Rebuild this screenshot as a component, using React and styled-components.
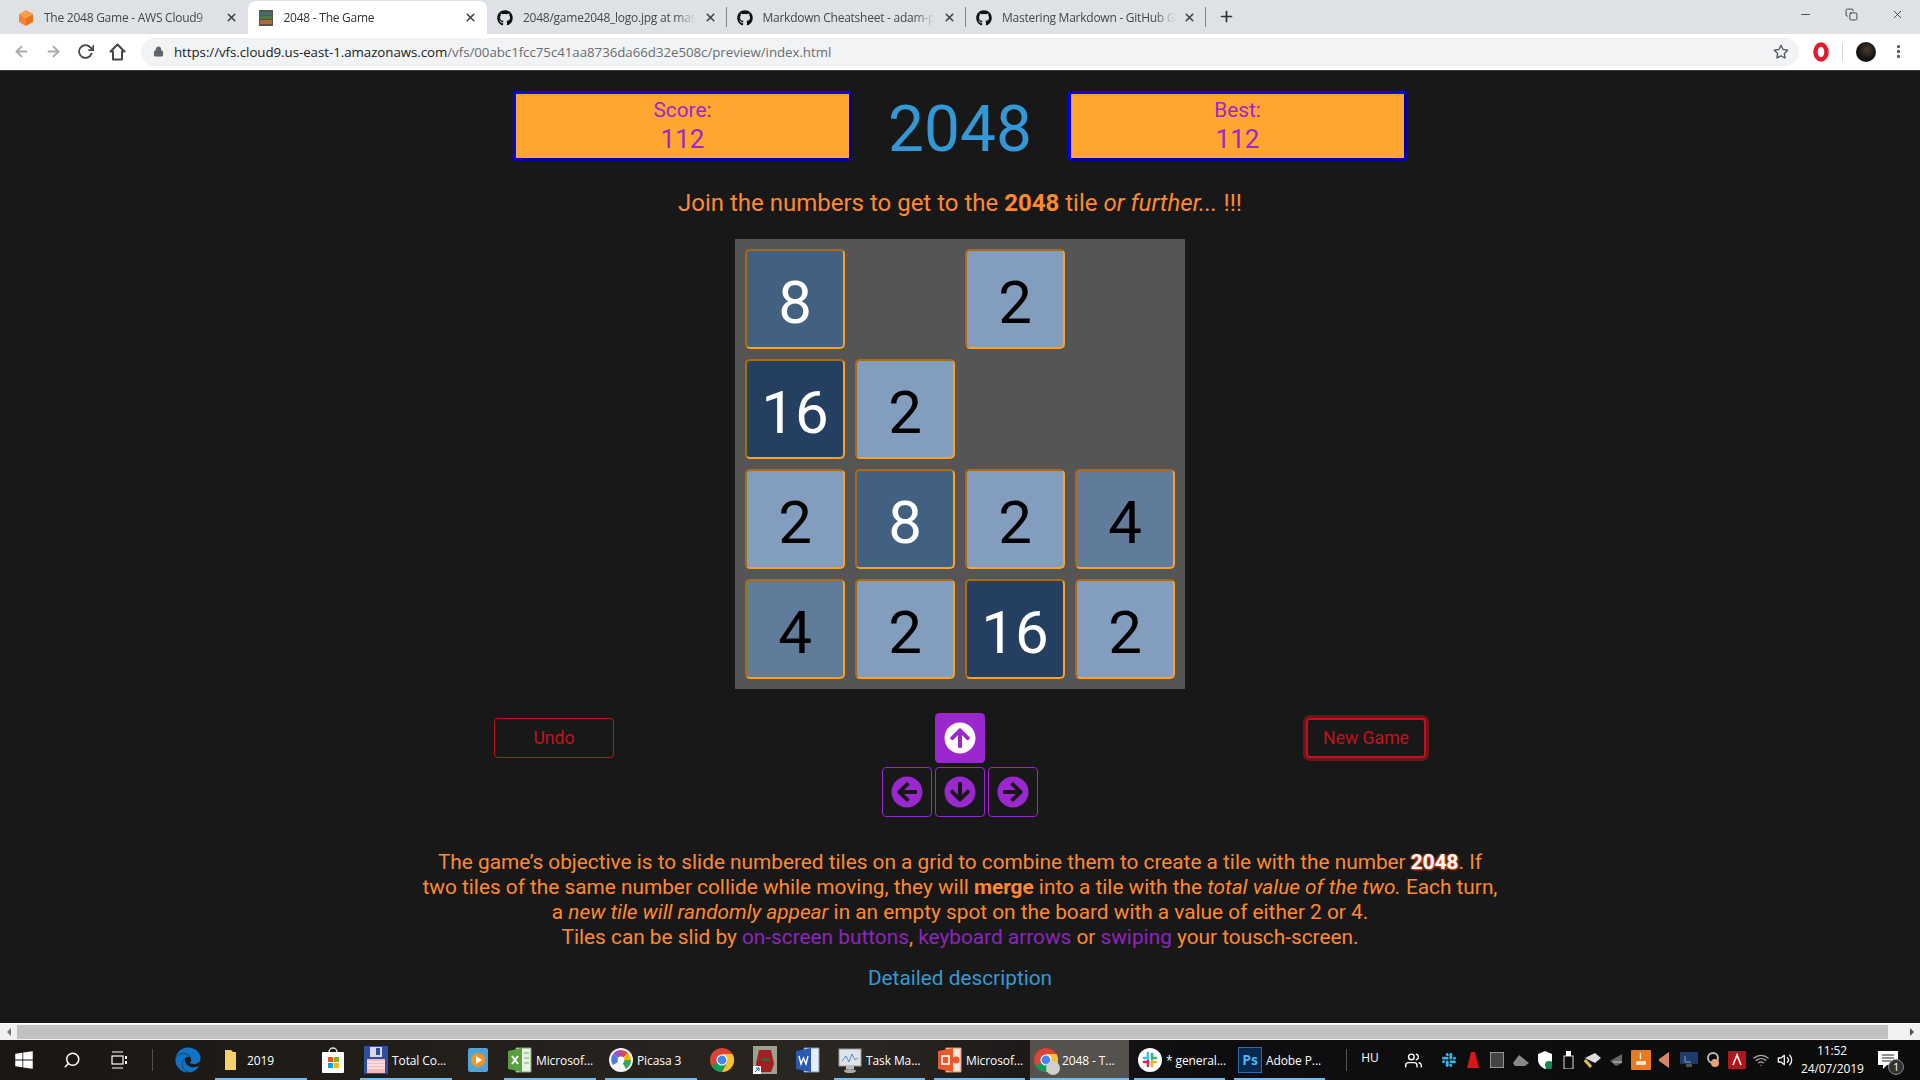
import React from 'react'
import styled, { createGlobalStyle } from 'styled-components'
import {
  FaGithub, FaWindows, FaEdge, FaArrowCircleUp, FaArrowCircleDown,
  FaArrowCircleLeft, FaArrowCircleRight, FaSlack
} from 'react-icons/fa'
import {
  FiArrowLeft, FiArrowRight, FiRotateCw, FiSearch, FiStar, FiMoreVertical,
  FiPlus, FiX, FiMinus, FiCopy, FiUsers, FiWifi, FiVolume2, FiLock
} from 'react-icons/fi'

const GlobalStyle = createGlobalStyle`
  html, body {
    margin: 0;
    height: 100%;
    overflow: hidden;
    font-family: Roboto, sans-serif;
    background: #181818;
  }
  * { box-sizing: border-box; }
`

const Screen = styled.div`
  width: 1920px;
  height: 1080px;
  display: flex;
  flex-direction: column;
`

/* browser chrome */
const TabStrip = styled.div`
  height: 34px;
  background: #dee1e6;
  display: flex;
  align-items: flex-end;
  padding-left: 8px;
  position: relative;
`
const Tab = styled.div`
  width: 239.5px;
  height: 33px;
  display: flex;
  align-items: center;
  padding: 0 10px;
  font: 12px "Open Sans", sans-serif;
  letter-spacing: -0.25px;
  color: ${p => (p.$active ? '#333' : '#45484c')};
  background: ${p => (p.$active ? '#fff' : 'transparent')};
  border-radius: 8px 8px 0 0;
  position: relative;
  &::after {
    content: '';
    display: ${p => (p.$divider ? 'block' : 'none')};
    position: absolute;
    right: 0;
    top: 6px;
    width: 1px;
    height: 20px;
    background: #80868b;
  }
`
const TabIcon = styled.span`
  width: 16px;
  height: 16px;
  flex: none;
  display: flex;
  margin-right: 10px;
  font-size: 16px;
  color: #111;
`
const TabTitle = styled.span`
  flex: 1;
  white-space: nowrap;
  overflow: hidden;
  margin-right: 8px;
  -webkit-mask-image: linear-gradient(90deg, #000 88%, transparent 100%);
  mask-image: linear-gradient(90deg, #000 88%, transparent 100%);
`
const TabClose = styled(FiX)`
  flex: none;
  font-size: 13px;
  color: #444;
  stroke-width: 3;
`
const NewTab = styled(FiPlus)`
  margin: 0 0 9px 12px;
  font-size: 17px;
  color: #333;
  stroke-width: 2.4;
`
const WindowButtons = styled.div`
  margin-left: auto;
  align-self: flex-start;
  display: flex;
  color: #333;
  font-size: 13px;
`
const WindowButton = styled.div`
  width: 46px;
  height: 28px;
  display: flex;
  align-items: center;
  justify-content: center;
  svg { stroke-width: 1.6; }
`
const Toolbar = styled.div`
  height: 37px;
  background: #fff;
  display: flex;
  align-items: center;
  flex: none;
  padding-bottom: 1px;
  border-bottom: 1px solid #3a3a3a;
`
const NavButton = styled.div`
  width: 32px;
  height: 28px;
  flex: none;
  display: flex;
  align-items: center;
  justify-content: center;
  font-size: 17px;
  color: ${p => (p.$dim ? '#a7abb0' : '#44474b')};
  svg { stroke-width: 2.6; }
`
const NavGroup = styled.div`
  display: flex;
  padding-left: 5px;
  width: 141px;
`
const Omnibox = styled.div`
  width: 1658px;
  height: 28px;
  background: #f1f3f4;
  border-radius: 14px;
  display: flex;
  align-items: center;
  padding: 0 10px 0 12px;
  font: 13.3px "Open Sans", sans-serif;
  letter-spacing: -0.045px;
  color: #6a6d71;
`
const Lock = styled(FiLock)`
  font-size: 11px;
  margin-right: 10px;
  color: #5f6368;
  fill: #5f6368;
`
const Host = styled.span`
  color: #202124;
`
const StarIcon = styled(FiStar)`
  margin-left: auto;
  font-size: 16px;
  color: #55585c;
  stroke-width: 2;
`
const ToolbarExtras = styled.div`
  flex: 1;
  display: flex;
  align-items: center;
  padding-left: 14px;
`
const ToolbarSeparator = styled.span`
  width: 1px;
  height: 18px;
  background: #cfd1d4;
  margin: 0 13px 0 13px;
`
const Avatar = styled.span`
  width: 20px;
  height: 20px;
  border-radius: 50%;
  background: radial-gradient(circle at 55% 40%, #4a3a30 0, #111 60%);
`
const MenuDots = styled(FiMoreVertical)`
  margin-left: 14px;
  font-size: 17px;
  color: #555;
  stroke-width: 2.6;
`

/* game page */
const Page = styled.main`
  flex: 1;
  background: #181818;
  display: flex;
  flex-direction: column;
  align-items: center;
  padding-top: 20px;
  overflow: hidden;
  color: #ff8a2e;
`
const Header = styled.header`
  width: 894px;
  height: 70px;
  display: flex;
  justify-content: space-between;
  align-items: center;
`
const ScoreBox = styled.div`
  width: 339px;
  height: 70px;
  background: #ffa530;
  border: 3px outset #0000ff;
  border-radius: 4px;
  color: #9b27cf;
  text-align: center;
  font-size: 20.8px;
  line-height: 29px;
  padding-top: 2px;
`
const ScoreValue = styled.div`
  font-size: 26px;
`
const Title = styled.h1`
  margin: 0;
  padding-top: 7px;
  font-size: 64px;
  font-weight: 400;
  color: #3498d6;
  line-height: 70px;
`
const Tagline = styled.p`
  margin: 28px 0 0;
  height: 29px;
  font-size: 24px;
  line-height: 29px;
`
const Board = styled.div`
  margin-top: 21px;
  width: 450px;
  height: 450px;
  padding: 10px;
  background: #555;
  display: grid;
  grid-template-columns: repeat(4, 100px);
  grid-auto-rows: 100px;
  gap: 10px;
`
const tileColors = {
  2: { bg: '#829dbd', fg: '#000' },
  4: { bg: '#617c9b', fg: '#000' },
  8: { bg: '#42607f', fg: '#fff' },
  16: { bg: '#243f5f', fg: '#fff' }
}
const Cell = styled.div`
  display: flex;
  align-items: center;
  justify-content: center;
  font-size: 60px;
  border-radius: 5px;
  padding-top: 6px;
  border: 2px inset #ffa020;
  background: ${p => tileColors[p.$value].bg};
  color: ${p => tileColors[p.$value].fg};
`
const Empty = styled.div``
const Controls = styled.div`
  margin-top: 24px;
  width: 932px;
  display: flex;
  justify-content: space-between;
  align-items: flex-start;
`
const GameButton = styled.button`
  width: 120px;
  height: 40px;
  margin-top: 5px;
  background: transparent;
  color: #c4111d;
  border: 1px solid #c4111d;
  border-radius: 4px;
  font: 17.6px Roboto, sans-serif;
  padding: 0;
  box-shadow: ${p => (p.$focus ? '0 0 0 3px rgba(196,17,29,0.5)' : 'none')};
  border-width: ${p => (p.$focus ? '2px' : '1px')};
`
const ArrowPad = styled.div`
  display: flex;
  flex-direction: column;
  align-items: center;
  gap: 4px;
`
const ArrowRow = styled.div`
  display: flex;
  gap: 3px;
`
const ArrowButton = styled.button`
  width: 50px;
  height: 50px;
  padding: 0;
  display: flex;
  align-items: center;
  justify-content: center;
  border-radius: 4px;
  border: 1px solid #9b27cf;
  font-size: 32px;
  background: ${p => (p.$active ? '#9b27cf' : 'transparent')};
  color: ${p => (p.$active ? '#fff' : '#9b27cf')};
`
const Description = styled.p`
  margin: 33px 0 0;
  width: 1082px;
  text-align: center;
  font-size: 20.8px;
  line-height: 25px;
`
const Glow = styled.strong`
  color: #fff;
  text-shadow: 1px 1px 2px #ff4a1e, -1px 0 2px #ff4a1e;
`
const Accent = styled.span`
  color: #8f24c0;
`
const DetailLink = styled.a`
  margin-top: 16px;
  font-size: 20.8px;
  line-height: 25px;
  color: #3498d6;
`

/* scrollbar */
const ScrollBar = styled.div`
  height: 17px;
  flex: none;
  background: #f1f1f1;
  display: flex;
  align-items: center;
  border-top: 1px solid #fff;
`
const ScrollArrow = styled.span`
  width: 17px;
  display: flex;
  justify-content: center;
  margin-left: ${p => (p.$end ? 'auto' : '0')};
  &::before {
    content: '';
    border: 4px solid transparent;
    border-right-color: ${p => (p.$end ? 'transparent' : '#777')};
    border-left-color: ${p => (p.$end ? '#505050' : 'transparent')};
    margin-left: ${p => (p.$end ? '4px' : '-4px')};
  }
`
const ScrollThumb = styled.span`
  width: 1871px;
  height: 14px;
  background: #c1c1c1;
`

/* taskbar */
const Taskbar = styled.footer`
  height: 40px;
  flex: none;
  display: flex;
  align-items: stretch;
  color: #fff;
  background: linear-gradient(90deg, #1a1613 0, #2a2622 45%, #0e0e10 62%, #0c0c0d 100%);
  font: 12px "Open Sans", sans-serif;
  letter-spacing: -0.1px;
`
const Slot = styled.div`
  width: ${p => p.$w}px;
  margin-right: ${p => p.$gap || 0}px;
  flex: none;
  display: flex;
  align-items: center;
  justify-content: center;
  font-size: ${p => p.$size || 20}px;
`
const Divider = styled.span`
  width: 1px;
  height: 22px;
  background: #55524e;
  margin-left: ${p => p.$left}px;
  margin-right: ${p => p.$right}px;
  align-self: center;
  flex: none;
`
const App = styled.div`
  width: ${p => p.$w}px;
  margin-right: ${p => p.$gap || 0}px;
  flex: none;
  display: flex;
  align-items: center;
  gap: 4px;
  padding-left: 4px;
  white-space: nowrap;
  position: relative;
  background: ${p => (p.$active ? '#55514c' : 'transparent')};
  &::after {
    content: '';
    position: absolute;
    left: 0;
    right: 0;
    bottom: 0;
    height: 2px;
    background: #76b9ed;
  }
`
const AppIcon = styled.span`
  width: 24px;
  flex: none;
  display: flex;
  justify-content: center;
  position: relative;
`
const TrayGroup = styled.div`
  display: flex;
  align-items: center;
  margin-left: 4px;
`
const TraySlot = styled.div`
  width: 24px;
  display: flex;
  justify-content: center;
  font-size: 16px;
`
const Clock = styled.div`
  width: 62px;
  margin-left: 4px;
  align-self: center;
  text-align: center;
  line-height: 18px;
  font-size: 12px;
`
const Lang = styled.span`
  width: 46px;
  align-self: center;
  text-align: center;
  margin-bottom: 6px;
`
const ActionCenter = styled.div`
  width: 44px;
  margin-left: 3px;
  display: flex;
  align-items: center;
  justify-content: center;
  position: relative;
`
const ActionBadge = styled.span`
  position: absolute;
  right: 6px;
  bottom: 5px;
  width: 16px;
  height: 16px;
  border-radius: 50%;
  background: #333;
  border: 1px solid #888;
  font-size: 11px;
  line-height: 14px;
  text-align: center;
`
const Photoshop = styled.span`
  width: 24px;
  height: 26px;
  background: #0a2a4d;
  border: 1px solid #2a6cb0;
  color: #4db5f5;
  font: bold 14px/24px "Open Sans", sans-serif;
  text-align: center;
  flex: none;
`
const ChromeBadge = styled.span`
  position: absolute;
  right: -2px;
  bottom: -3px;
  width: 14px;
  height: 14px;
  border-radius: 50%;
  background: #cfcfcf;
`

/* small drawn icons */
const Home = () => (
  <svg width="17" height="18" viewBox="0 0 17 18">
    <path d="M8.5 1.5L1.5 8.5H4V16.5H13V8.5H15.5z" fill="none" stroke="#44474b" strokeWidth="2" strokeLinejoin="round" />
  </svg>
)
const TaskView = () => (
  <svg width="18" height="18" viewBox="0 0 18 18" fill="none" stroke="#fff" strokeWidth="1.2">
    <path d="M1 1h11M1 17h11" />
    <rect x="1" y="5" width="11" height="8" />
    <path d="M15 5v3M15 10v3" strokeWidth="2" />
  </svg>
)
const Notification = () => (
  <svg width="20" height="18" viewBox="0 0 20 18">
    <path d="M0 0h20v14H9l-4 4v-4H0z" fill="#fff" />
    <path d="M4 4h12M4 7h12M4 10h9" stroke="#222" />
  </svg>
)
const Chrome = ({ size = 20 }) => (
  <svg width={size} height={size} viewBox="0 0 24 24">
    <circle cx="12" cy="12" r="12" fill="#db4437" />
    <path d="M12 12 L1.6 18 A12 12 0 0 0 12 24 L18 13z" fill="#0f9d58" />
    <path d="M12 6 H22.4 A12 12 0 0 1 12 24 L18 13z" fill="#fbc02d" />
    <circle cx="12" cy="12" r="5.6" fill="#fff" />
    <circle cx="12" cy="12" r="4.4" fill="#4285f4" />
  </svg>
)
const Cube = () => (
  <svg width="16" height="16" viewBox="0 0 16 16">
    <path d="M8 0l7 4-7 4-7-4z" fill="#f9a04a" />
    <path d="M1 4l7 4v8l-7-4z" fill="#f58536" />
    <path d="M15 4l-7 4v8l7-4z" fill="#e8731f" />
  </svg>
)
const Thumb = () => (
  <svg width="16" height="16" viewBox="0 0 16 16">
    <rect x="1" width="14" height="16" fill="#5b5348" />
    <rect x="2" y="2" width="12" height="3" fill="#3c6e7c" />
    <rect x="2" y="6" width="12" height="3" fill="#4d7a4c" />
    <rect x="2" y="10" width="12" height="4" fill="#b06a3a" />
  </svg>
)
const Opera = () => (
  <svg width="16" height="20" viewBox="0 0 16 20">
    <ellipse cx="8" cy="10" rx="5.5" ry="7.5" fill="none" stroke="#e8182c" strokeWidth="4.4" />
  </svg>
)
const Folder = () => (
  <svg width="14" height="24" viewBox="0 0 14 24">
    <path d="M1 2h6l2 2h3v18H1z" fill="#f6d169" />
  </svg>
)
const Store = () => (
  <svg width="24" height="28" viewBox="0 0 24 28">
    <path d="M8 6a4 4 0 0 1 8 0" fill="none" stroke="#ddd" strokeWidth="1.5" />
    <rect x="1" y="6" width="22" height="21" rx="1" fill="#fff" />
    <rect x="7" y="11" width="5" height="5" fill="#f25022" />
    <rect x="13" y="11" width="5" height="5" fill="#7fba00" />
    <rect x="7" y="17" width="5" height="5" fill="#00a4ef" />
    <rect x="13" y="17" width="5" height="5" fill="#ffb900" />
  </svg>
)
const Floppy = () => (
  <svg width="24" height="28" viewBox="0 0 24 28">
    <rect x="0" y="0" width="24" height="28" rx="1" fill="#2d4f9e" />
    <rect x="6" y="1" width="12" height="10" fill="#d8dce8" />
    <rect x="12" y="2" width="4" height="7" fill="#2d4f9e" />
    <rect x="3" y="13" width="18" height="14" fill="#f5b8b8" />
    <path d="M3 16h18M3 19h18M3 22h18" stroke="#fff" />
  </svg>
)
const Media = () => (
  <svg width="20" height="24" viewBox="0 0 20 24">
    <rect width="20" height="24" rx="2" fill="#4fa3d6" />
    <circle cx="10" cy="12" r="7" fill="#f7941d" />
    <path d="M8 8l6 4-6 4z" fill="#fff" />
  </svg>
)
const Excel = () => (
  <svg width="24" height="26" viewBox="0 0 24 26">
    <path d="M8 1h15v24H8z" fill="#e8f3e4" stroke="#7aa874" />
    <path d="M0 4l14-3v24L0 22z" fill="#5a9e3f" />
    <path d="M4 9l6 8M10 9l-6 8" stroke="#fff" strokeWidth="2" />
    <path d="M16 6h5M16 11h5M16 16h5" stroke="#7aa874" />
  </svg>
)
const Picasa = () => (
  <svg width="24" height="24" viewBox="0 0 24 24">
    <circle cx="12" cy="12" r="12" fill="#f4f4f4" />
    <path d="M12 2a10 10 0 0 1 7 3l-7 7z" fill="#e8453c" />
    <path d="M19 5a10 10 0 0 1 3 7H12z" fill="#f7b500" />
    <path d="M22 12a10 10 0 0 1-5 9l-5-9z" fill="#3aa757" />
    <path d="M12 2a10 10 0 0 0-8 4l8 6z" fill="#a04fc0" />
    <path d="M4 6a10 10 0 0 0 0 11l8-5z" fill="#4a7fe0" />
    <circle cx="12" cy="12" r="3.4" fill="#fff" />
  </svg>
)
const RedApp = () => (
  <svg width="24" height="28" viewBox="0 0 24 28">
    <rect width="24" height="28" fill="#9ca08f" />
    <path d="M6 4h12l3 14-3 8H5l-2-8z" fill="#a31f22" />
    <path d="M8 12h9v3H8z" fill="#2f6b3a" />
    <rect x="0" y="20" width="8" height="8" fill="#fff" />
    <path d="M2 26l4-4M3 22h3v3" stroke="#1c50a8" fill="none" />
  </svg>
)
const Word = () => (
  <svg width="24" height="26" viewBox="0 0 24 26">
    <path d="M8 1h15v24H8z" fill="#e8eef8" stroke="#7b93c4" />
    <path d="M0 4l15-3v24L0 22z" fill="#2a5ab0" />
    <path d="M3 9l2 8 2.5-6 2.5 6 2-8" stroke="#fff" fill="none" strokeWidth="1.4" />
  </svg>
)
const TaskMan = () => (
  <svg width="24" height="26" viewBox="0 0 24 26">
    <rect x="1" y="2" width="22" height="17" fill="#dfe3e8" stroke="#9a9a9a" />
    <path d="M4 14l4-5 3 6 3-8 3 6 3-2" stroke="#4a90d0" fill="none" />
    <rect x="8" y="19" width="8" height="3" fill="#bbb" />
    <ellipse cx="12" cy="24" rx="6" ry="2" fill="#aaa" />
  </svg>
)
const Powerpoint = () => (
  <svg width="24" height="26" viewBox="0 0 24 26">
    <path d="M8 1h15v24H8z" fill="#fbe3da" stroke="#e08a6a" />
    <path d="M0 4l15-3v24L0 22z" fill="#e8582a" />
    <rect x="4" y="9" width="7" height="8" fill="none" stroke="#fff" strokeWidth="1.6" />
    <circle cx="18" cy="13" r="3.4" fill="#e8582a" />
  </svg>
)
const SlackIcon = () => (
  <svg width="24" height="24" viewBox="0 0 24 24">
    <circle cx="12" cy="12" r="12" fill="#fff" />
    <path d="M10 5v6M6 10h4" stroke="#36c5f0" strokeWidth="2.6" strokeLinecap="round" />
    <path d="M14 6v5M14 10h4" stroke="#2eb67d" strokeWidth="2.6" strokeLinecap="round" />
    <path d="M14 13v5M14 14h4" stroke="#ecb22e" strokeWidth="2.6" strokeLinecap="round" />
    <path d="M10 13v5M6 14h4" stroke="#e01e5a" strokeWidth="2.6" strokeLinecap="round" />
  </svg>
)
const tray = [
  <FaSlack color="#35b6e8" />,
  <svg width="14" height="18" viewBox="0 0 14 18"><path d="M5 1h4l4 16H1z" fill="#d81818" /></svg>,
  <svg width="14" height="16" viewBox="0 0 14 16"><rect width="14" height="16" fill="#444" stroke="#ddd" /></svg>,
  <svg width="18" height="14" viewBox="0 0 18 14"><path d="M1 10l6-8 10 8-4 3H3z" fill="#888" /></svg>,
  <svg width="14" height="18" viewBox="0 0 14 18"><path d="M7 0l7 3v6c0 4-3 7-7 9-4-2-7-5-7-9V3z" fill="#fff" /><circle cx="11" cy="14" r="4" fill="#138a4d" /></svg>,
  <svg width="12" height="18" viewBox="0 0 12 18"><rect x="1" y="5" width="9" height="13" fill="none" stroke="#ddd" /><rect x="3" y="0" width="5" height="5" fill="#fff" /></svg>,
  <svg width="18" height="16" viewBox="0 0 18 16"><path d="M1 6l10-5 6 5-6 5z" fill="#ddd" /><path d="M1 8l6 7" stroke="#e0c040" strokeWidth="3" /></svg>,
  <svg width="16" height="14" viewBox="0 0 16 14"><path d="M1 8l12-7v9l-6 3z" fill="#666" /><path d="M4 9h9" stroke="#ccc" /></svg>,
  <svg width="20" height="20" viewBox="0 0 20 20"><rect width="20" height="20" rx="1" fill="#ea7a1e" /><path d="M6 12h8v2H6zM9 3c2 2-1 3 1 6" stroke="#fff" fill="none" strokeWidth="1.4" /></svg>,
  <svg width="14" height="18" viewBox="0 0 14 18"><path d="M11 1v16L1 10V8z" fill="#d88466" /></svg>,
  <svg width="18" height="16" viewBox="0 0 18 16"><rect width="18" height="12" fill="#1e3a6a" /><path d="M5 4v6h6" stroke="#7ac" fill="none" /><rect x="6" y="12" width="6" height="3" fill="#555" /></svg>,
  <svg width="18" height="18" viewBox="0 0 18 18"><circle cx="9" cy="7" r="5" fill="none" stroke="#bbb" strokeWidth="2" /><circle cx="11" cy="12" r="4" fill="#e8a070" /></svg>,
  <svg width="18" height="18" viewBox="0 0 18 18"><rect width="18" height="18" rx="1" fill="#b5121b" /><path d="M5 14L9 4l4 10" stroke="#fff" fill="none" strokeWidth="1.6" /></svg>,
  <FiWifi color="#aaa" />,
  <FiVolume2 color="#eee" />
]

const tabs = [
  { icon: <Cube />, title: 'The 2048 Game - AWS Cloud9' },
  { icon: <Thumb />, title: '2048 - The Game', active: true },
  { icon: <FaGithub />, title: '2048/game2048_logo.jpg at master', divider: true },
  { icon: <FaGithub />, title: 'Markdown Cheatsheet - adam-p/markdown', divider: true },
  { icon: <FaGithub />, title: 'Mastering Markdown - GitHub Guides', divider: true }
]

const board = [
  [8, 0, 2, 0],
  [16, 2, 0, 0],
  [2, 8, 2, 4],
  [4, 2, 16, 2]
]

export default function Game2048() {
  return (
    <Screen>
      <GlobalStyle />
      <TabStrip>
        {tabs.map(tab => (
          <Tab key={tab.title} $active={tab.active} $divider={tab.divider}>
            <TabIcon>{tab.icon}</TabIcon>
            <TabTitle>{tab.title}</TabTitle>
            <TabClose />
          </Tab>
        ))}
        <NewTab />
        <WindowButtons>
          <WindowButton><FiMinus /></WindowButton>
          <WindowButton><FiCopy /></WindowButton>
          <WindowButton><FiX /></WindowButton>
        </WindowButtons>
      </TabStrip>
      <Toolbar>
        <NavGroup>
          <NavButton $dim><FiArrowLeft /></NavButton>
          <NavButton $dim><FiArrowRight /></NavButton>
          <NavButton><FiRotateCw /></NavButton>
          <NavButton><Home /></NavButton>
        </NavGroup>
        <Omnibox>
          <Lock />
          <span><Host>https://vfs.cloud9.us-east-1.amazonaws.com</Host>/vfs/00abc1fcc75c41aa8736da66d32e508c/preview/index.html</span>
          <StarIcon />
        </Omnibox>
        <ToolbarExtras>
          <Opera />
          <ToolbarSeparator />
          <Avatar />
          <MenuDots />
        </ToolbarExtras>
      </Toolbar>

      <Page>
        <Header>
          <ScoreBox>Score:<ScoreValue>112</ScoreValue></ScoreBox>
          <Title>2048</Title>
          <ScoreBox>Best:<ScoreValue>112</ScoreValue></ScoreBox>
        </Header>
        <Tagline>Join the numbers to get to the <strong>2048</strong> tile <em>or further...</em> !!!</Tagline>
        <Board>
          {board.flat().map((value, i) => (
            value ? <Cell key={i} $value={value}>{value}</Cell> : <Empty key={i} />
          ))}
        </Board>
        <Controls>
          <GameButton>Undo</GameButton>
          <ArrowPad>
            <ArrowButton $active><FaArrowCircleUp /></ArrowButton>
            <ArrowRow>
              <ArrowButton><FaArrowCircleLeft /></ArrowButton>
              <ArrowButton><FaArrowCircleDown /></ArrowButton>
              <ArrowButton><FaArrowCircleRight /></ArrowButton>
            </ArrowRow>
          </ArrowPad>
          <GameButton $focus>New Game</GameButton>
        </Controls>
        <Description>
          The game’s objective is to slide numbered tiles on a grid to combine them to create a tile with the number <Glow>2048</Glow>. If
          two tiles of the same number collide while moving, they will <strong>merge</strong> into a tile with the <em>total value of the two.</em> Each turn,
          a <em>new tile will randomly appear</em> in an empty spot on the board with a value of either 2 or 4.<br />
          Tiles can be slid by <Accent>on-screen buttons</Accent>, <Accent>keyboard arrows</Accent> or <Accent>swiping</Accent> your tousch-screen.
        </Description>
        <DetailLink>Detailed description</DetailLink>
      </Page>

      <ScrollBar>
        <ScrollArrow />
        <ScrollThumb />
        <ScrollArrow $end />
      </ScrollBar>

      <Taskbar>
        <Slot $w={48}><FaWindows /></Slot>
        <Slot $w={48} $size={18}><FiSearch style={{ transform: 'scaleX(-1)' }} /></Slot>
        <Slot $w={48}><TaskView /></Slot>
        <Divider $left={8} $right={13} />
        <Slot $w={44} $gap={5} $size={26}><FaEdge color="#1172c8" /></Slot>
        <App $w={92} $gap={4}><AppIcon><Folder /></AppIcon>2019</App>
        <Slot $w={44} $gap={5}><Store /></Slot>
        <App $w={92} $gap={4}><AppIcon><Floppy /></AppIcon>Total Co...</App>
        <Slot $w={43} $gap={5}><Media /></Slot>
        <App $w={92} $gap={9}><AppIcon><Excel /></AppIcon>Microsof...</App>
        <App $w={92} $gap={3}><AppIcon><Picasa /></AppIcon>Picasa 3</App>
        <Slot $w={43}><Chrome size={24} /></Slot>
        <Slot $w={43}><RedApp /></Slot>
        <Slot $w={43} $gap={5}><Word /></Slot>
        <App $w={91} $gap={9}><AppIcon><TaskMan /></AppIcon>Task Ma...</App>
        <App $w={91} $gap={5}><AppIcon><Powerpoint /></AppIcon>Microsof...</App>
        <App $w={99} $gap={5} $active><AppIcon><Chrome size={24} /><ChromeBadge /></AppIcon>2048 - T...</App>
        <App $w={91} $gap={9}><AppIcon><SlackIcon /></AppIcon>* general...</App>
        <App $w={91}><AppIcon><Photoshop>Ps</Photoshop></AppIcon>Adobe P...</App>
        <Divider $left={21} $right={0} />
        <Lang>HU</Lang>
        <Slot $w={40} $size={17}><FiUsers /></Slot>
        <TrayGroup>
          {tray.map((icon, i) => <TraySlot key={i}>{icon}</TraySlot>)}
        </TrayGroup>
        <Clock>11:52<br />24/07/2019</Clock>
        <ActionCenter>
          <Notification />
          <ActionBadge>1</ActionBadge>
        </ActionCenter>
      </Taskbar>
    </Screen>
  )
}
